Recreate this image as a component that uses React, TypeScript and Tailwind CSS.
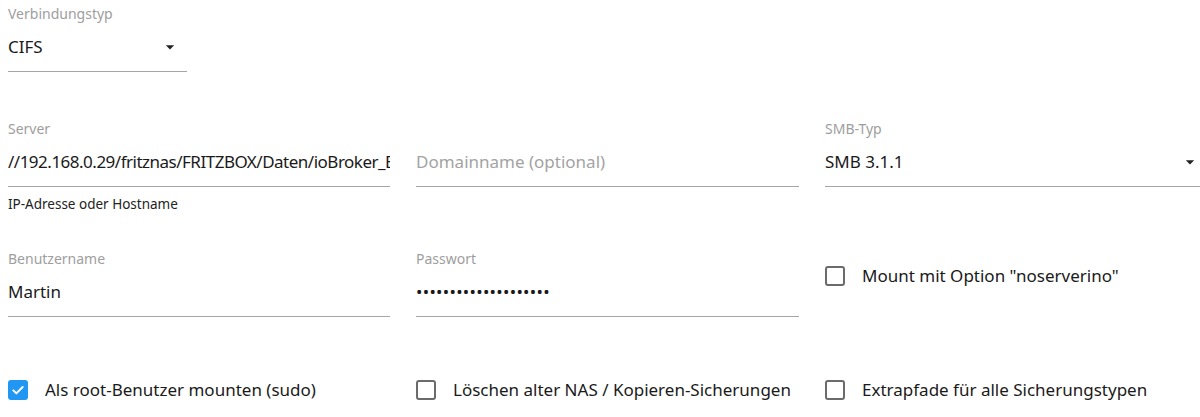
const font = { fontFamily: '"Noto Sans", "Open Sans", sans-serif' }

const ArrowDown = () => (
  <svg viewBox="0 0 24 24" className="w-5 h-5 shrink-0 fill-[#222]">
    <path d="M7 10l5 5 5-5z" />
  </svg>
)

interface FieldProps {
  label?: string
  value?: string
  placeholder?: string
  select?: boolean
  helper?: string
  password?: boolean
  tight?: boolean
}

const Field = ({ label, value, placeholder, select, helper, password, tight }: FieldProps) => {
  return (
    <div className="w-full">
      <div className="h-4 text-[14px] leading-4 text-[#9e9e9e]">{label}</div>
      <div className="mt-[13px] flex items-center border-b border-[#a6a6a6] pb-3">
        <div
          className={`flex-1 overflow-hidden whitespace-nowrap text-[17px] leading-6 text-[#1a1a1a] ${password ? 'tracking-[0.3px]' : ''} ${tight ? 'tracking-[-0.5px]' : ''}`}
        >
          {value ? value : <span className="text-[#a3a3a3]">{placeholder}</span>}
        </div>
        {select && <div className="mr-[7px]"><ArrowDown /></div>}
      </div>
      {helper && <div className="mt-[9px] text-[13.5px] leading-4 text-[#222]">{helper}</div>}
    </div>
  )
}

const Checkbox = ({ checked, label }: { checked?: boolean; label: string }) => (
  <div className="flex items-center h-5 gap-[17px]">
    {checked ? (
      <div className="w-5 h-5 shrink-0 rounded-[3px] bg-[#2196f3] flex items-center justify-center">
        <svg viewBox="0 0 24 24" className="w-4 h-4" fill="none" stroke="white" strokeWidth="3" strokeLinecap="round" strokeLinejoin="round">
          <path d="M5 12.5l4.5 4.5L19 7.5" />
        </svg>
      </div>
    ) : (
      <div className="w-5 h-5 shrink-0 rounded-[3px] border-2 border-[#6b6b6b]" />
    )}
    <span className="text-[17px] leading-6 text-[#1a1a1a] whitespace-nowrap">{label}</span>
  </div>
)

export default function App() {
  return (
    <div className="w-[1200px] h-[417px] overflow-hidden bg-white" style={font}>
      <div className="pl-2 pt-[6px] w-[1240px]">
        <div className="w-[179px]">
          <Field label="Verbindungstyp" value="CIFS" select />
        </div>

        <div className="mt-[49px] grid grid-cols-[382px_383px_382px] gap-x-[26px] items-start">
          <Field label="Server" value="//192.168.0.29/fritznas/FRITZBOX/Daten/ioBroker_Backup" helper="IP-Adresse oder Hostname" tight />
          <Field placeholder="Domainname (optional)" />
          <Field label="SMB-Typ" value="SMB 3.1.1" select />
        </div>

        <div className="mt-[39px] grid grid-cols-[382px_383px_382px] gap-x-[26px] items-start">
          <Field label="Benutzername" value="Martin" />
          <Field label="Passwort" value="••••••••••••••••••••" password />
          <div className="pt-[15px]">
            <Checkbox label={'Mount mit Option "noserverino"'} />
          </div>
        </div>

        <div className="mt-[63px] grid grid-cols-[382px_383px_382px] gap-x-[26px] items-start">
          <Checkbox checked label="Als root-Benutzer mounten (sudo)" />
          <Checkbox label="Löschen alter NAS / Kopieren-Sicherungen" />
          <Checkbox label="Extrapfade für alle Sicherungstypen" />
        </div>
      </div>
    </div>
  )
}
